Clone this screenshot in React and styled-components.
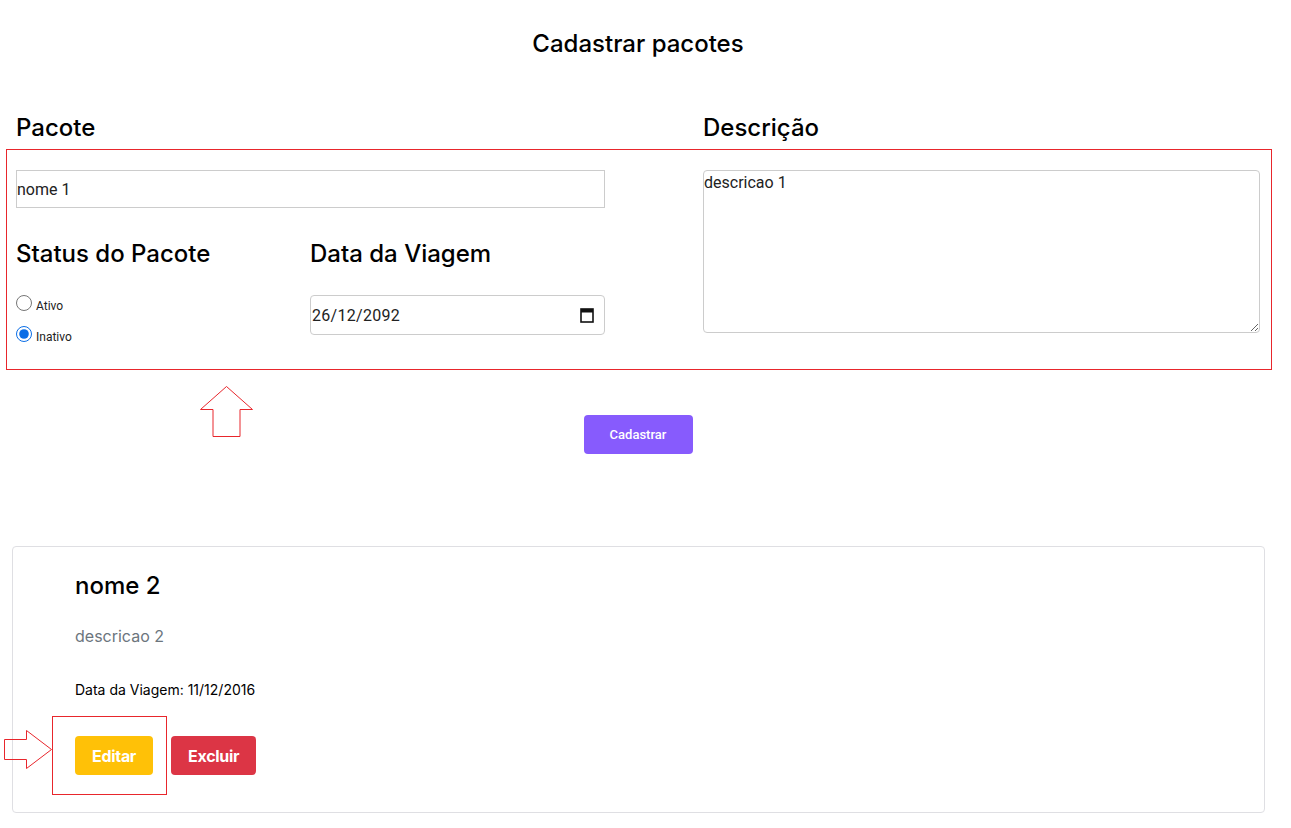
import React, { useState } from "react"
import styled, { createGlobalStyle } from "styled-components"

const Global = createGlobalStyle`
  body {
    margin: 0;
    font-family: Inter, "Noto Sans", sans-serif;
    color: #000;
    background: #fff;
  }
`
const Page = styled("div")`
  position: relative;
  width: 1276px;
  height: 828px;
`
const Title = styled("h1")`
  margin: 0;
  padding-top: 29px;
  height: 30px;
  text-align: center;
  font-size: 24px;
  font-weight: 500;
  line-height: 30px;
`
const FormGrid = styled("div")`
  display: grid;
  grid-template-columns: 589px 557px;
  column-gap: 98px;
  padding: 54px 0 0 16px;
`
const Column = styled("div")`
  display: flex;
  flex-direction: column;
`
const Heading = styled("h2")`
  margin: 0;
  font-size: 24px;
  font-weight: 500;
  line-height: 30px;
  height: 30px;
`
const TextInput = styled("input")`
  box-sizing: border-box;
  width: 100%;
  height: 38px;
  margin-top: 27px;
  padding: 0;
  border: 1px solid #ccc;
  font-family: Roboto, sans-serif;
  font-size: 16px;
  color: #222;
  outline: none;
`
const SubGrid = styled("div")`
  display: grid;
  grid-template-columns: 294px 295px;
  margin-top: 31px;
`
const RadioList = styled("div")`
  display: flex;
  flex-direction: column;
  gap: 11px;
  margin-top: 27px;
`
const RadioLabel = styled("label")`
  display: flex;
  align-items: center;
  font-family: Roboto, sans-serif;
  font-size: 12px;
  color: #222;
  height: 20px;
  input {
    margin: 0 4px 0 0;
    width: 16px;
    height: 16px;
    accent-color: #0b6ee6;
    position: relative;
    top: -3px;
  }
`
const DateBox = styled("label")`
  box-sizing: border-box;
  display: flex;
  align-items: center;
  width: 100%;
  height: 40px;
  margin-top: 26px;
  padding: 0 10px 0 1px;
  border: 1px solid #ccc;
  border-radius: 4px;
  input {
    flex: 1;
    border: none;
    outline: none;
    padding: 0;
    font-family: Roboto, sans-serif;
    font-size: 16px;
    letter-spacing: 0.3px;
    color: #222;
    background: transparent;
  }
`
const TextArea = styled("textarea")`
  box-sizing: border-box;
  width: 100%;
  height: 163px;
  margin-top: 27px;
  padding: 2px 0 0 0;
  border: 1px solid #ccc;
  border-radius: 4px;
  font-family: Roboto, sans-serif;
  font-size: 16px;
  color: #222;
  resize: vertical;
`
const SubmitRow = styled("div")`
  display: flex;
  justify-content: center;
  padding: 68px 0 0 0;
`
const SubmitButton = styled("button")`
  width: 109px;
  height: 39px;
  border: none;
  border-radius: 4px;
  background: #875bfd;
  color: #fff;
  font-family: Roboto, sans-serif;
  font-size: 13px;
  font-weight: 500;
`
const Card = styled("div")`
  box-sizing: border-box;
  margin: 92px 11px 0 12px;
  height: 267px;
  border: 1px solid #dfdfe3;
  border-radius: 4px;
  padding: 24px 0 0 62px;
`
const CardTitle = styled("h3")`
  margin: 0;
  font-size: 24px;
  font-weight: 500;
  line-height: 30px;
`
const CardDesc = styled("p")`
  margin: 25px 0 0;
  color: #6c757d;
  font-size: 16px;
  line-height: 20px;
`
const CardDate = styled("p")`
  margin: 34px 0 0;
  font-size: 14px;
  line-height: 20px;
`
const Actions = styled("div")`
  display: flex;
  gap: 18px;
  margin-top: 36px;
`
const ActionButton = styled("button")`
  height: 39px;
  padding: 0 17px;
  border: none;
  border-radius: 4px;
  background: ${(p) => p.$bg};
  color: #fff;
  font-family: Inter, sans-serif;
  font-size: 16px;
  font-weight: 700;
  letter-spacing: -0.3px;
`
const Marker = styled("div")`
  position: absolute;
  left: ${(p) => p.$x}px;
  top: ${(p) => p.$y}px;
  width: ${(p) => p.$w}px;
  height: ${(p) => p.$h}px;
  border: 1px solid #e8262c;
  pointer-events: none;
`
const ArrowSvg = styled("svg")`
  position: absolute;
  left: ${(p) => p.$x}px;
  top: ${(p) => p.$y}px;
  pointer-events: none;
`

const CalendarIcon = () => (
  <svg width="14" height="16" viewBox="0 0 14 16">
    <rect x="1" y="2" width="12" height="13" fill="none" stroke="#111" strokeWidth="1.6" />
    <rect x="1" y="2" width="12" height="3.5" fill="#111" />
  </svg>
)

const App = () => {
  const [status, setStatus] = useState("inativo")

  return (
    <Page>
      <Global />
      <Title>Cadastrar pacotes</Title>
      <FormGrid>
        <Column>
          <Heading>Pacote</Heading>
          <TextInput defaultValue="nome 1" />
          <SubGrid>
            <Column>
              <Heading>Status do Pacote</Heading>
              <RadioList>
                <RadioLabel>
                  <input
                    type="radio"
                    name="status"
                    checked={status === "ativo"}
                    onChange={() => setStatus("ativo")}
                  />
                  Ativo
                </RadioLabel>
                <RadioLabel>
                  <input
                    type="radio"
                    name="status"
                    checked={status === "inativo"}
                    onChange={() => setStatus("inativo")}
                  />
                  Inativo
                </RadioLabel>
              </RadioList>
            </Column>
            <Column>
              <Heading>Data da Viagem</Heading>
              <DateBox>
                <input defaultValue="26/12/2092" />
                <CalendarIcon />
              </DateBox>
            </Column>
          </SubGrid>
        </Column>
        <Column>
          <Heading>Descrição</Heading>
          <TextArea defaultValue="descricao 1" />
        </Column>
      </FormGrid>
      <SubmitRow>
        <SubmitButton>Cadastrar</SubmitButton>
      </SubmitRow>
      <Card>
        <CardTitle>nome 2</CardTitle>
        <CardDesc>descricao 2</CardDesc>
        <CardDate>Data da Viagem: 11/12/2016</CardDate>
        <Actions>
          <ActionButton $bg="#ffc107">Editar</ActionButton>
          <ActionButton $bg="#dc3545">Excluir</ActionButton>
        </Actions>
      </Card>

      <Marker $x={6} $y={149} $w={1264} $h={219} />
      <Marker $x={52} $y={716} $w={113} $h={77} />
      <ArrowSvg $x={199} $y={385} width="55" height="54" viewBox="0 0 55 54">
        <path
          d="M1.5 24.5 L27.5 1.5 L53.5 24.5 L41 24.5 L41 51.5 L14 51.5 L14 24.5 Z"
          fill="none"
          stroke="#e8262c"
          strokeWidth="1"
        />
      </ArrowSvg>
      <ArrowSvg $x={3} $y={729} width="50" height="41" viewBox="0 0 50 41">
        <path
          d="M1.5 10.5 L23.5 10.5 L23.5 1.5 L48.5 20.5 L23.5 39.5 L23.5 30.5 L1.5 30.5 Z"
          fill="none"
          stroke="#e8262c"
          strokeWidth="1"
        />
      </ArrowSvg>
    </Page>
  )
}

export default App
